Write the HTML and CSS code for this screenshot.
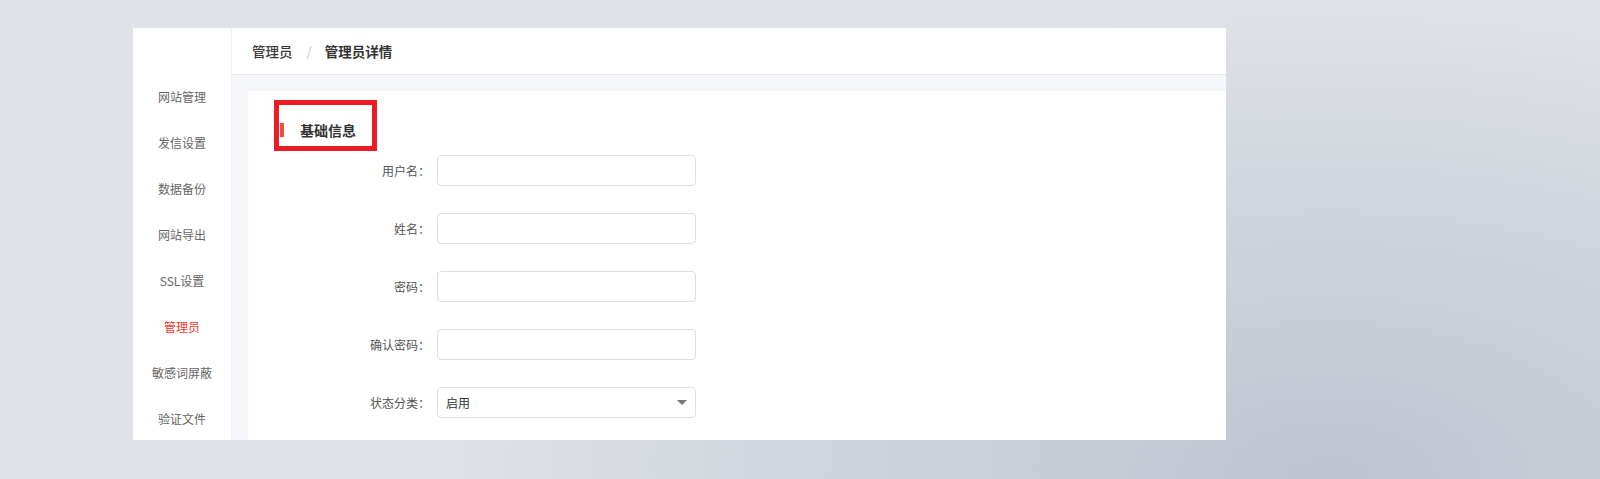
FILE: index.html
```html
<!DOCTYPE html>
<html lang="zh-CN">
<head>
<meta charset="utf-8">
<title>管理员详情</title>
<link rel="stylesheet" href="styles.css">
</head>
<body>
<div class="card">
  <aside class="sidebar">
    <div class="nav-item">网站管理</div>
    <div class="nav-item">发信设置</div>
    <div class="nav-item">数据备份</div>
    <div class="nav-item">网站导出</div>
    <div class="nav-item">SSL设置</div>
    <div class="nav-item active">管理员</div>
    <div class="nav-item">敏感词屏蔽</div>
    <div class="nav-item">验证文件</div>
  </aside>
  <main class="main">
    <header class="crumbs">
      <span class="crumb">管理员</span>
      <span class="sep">/</span>
      <span class="crumb current">管理员详情</span>
    </header>
    <div class="body">
      <section class="panel">
        <div class="title-wrap">
          <div class="section-title"><span class="bar"></span>基础信息</div>
        </div>
        <form class="form">
          <div class="row"><label class="label">用户名：</label><input class="input" type="text"></div>
          <div class="row"><label class="label">姓名：</label><input class="input" type="text"></div>
          <div class="row"><label class="label">密码：</label><input class="input" type="password"></div>
          <div class="row"><label class="label">确认密码：</label><input class="input" type="password"></div>
          <div class="row"><label class="label">状态分类：</label>
            <div class="select"><span class="select-text">启用</span><span class="caret"></span></div>
          </div>
        </form>
      </section>
    </div>
  </main>
</div>
</body>
</html>
```
FILE: styles.css
```css
html, body {
  margin: 0;
  height: 100%;
}
body {
  width: 1600px;
  height: 479px;
  overflow: hidden;
  box-sizing: border-box;
  padding: 28px 0 0 133px;
  background: radial-gradient(ellipse 900px 480px at 1330px 479px, #bec4d0 0%, #ccd1da 45%, #dfe2e7 100%);
  font-family: "Noto Sans CJK SC", "Noto Sans", sans-serif;
  color: #333;
}
.card {
  width: 1093px;
  height: 412px;
  background: #fff;
  display: flex;
  overflow: hidden;
}
.sidebar {
  width: 98px;
  flex: none;
  padding-top: 46px;
  border-right: 1px solid #eef0f3;
  display: flex;
  flex-direction: column;
}
.nav-item {
  height: 46px;
  line-height: 46px;
  flex: none;
  text-align: center;
  font-size: 12px;
  color: #666;
}
.nav-item.active {
  color: #f5352a;
}
.main {
  flex: 1;
  display: flex;
  flex-direction: column;
  min-width: 0;
}
.crumbs {
  height: 46px;
  flex: none;
  border-bottom: 1px solid #e8eaec;
  display: flex;
  align-items: center;
  padding-left: 20px;
  font-size: 13.5px;
  color: #3a3a3a;
}
.crumb {
  font-weight: 500;
}
.crumb.current {
  font-weight: 700;
  color: #333;
}
.sep {
  color: #c5c8ce;
  font-weight: 400;
  margin: 0 13px 0 14px;
}
.body {
  flex: 1;
  background: #f5f7fa;
  padding: 16px 0 0 16px;
  display: flex;
}
.panel {
  flex: 1;
  background: #fff;
}
.title-wrap {
  margin: 9px 0 0 26px;
  width: 93px;
  height: 41px;
  border: 5px solid #ed1c24;
  display: flex;
  align-items: flex-end;
}
.section-title {
  display: flex;
  align-items: center;
  font-size: 14px;
  font-weight: 700;
  color: #333;
  height: 20px;
  margin-bottom: 6px;
}
.bar {
  width: 4px;
  height: 14px;
  background: #f04c3a;
  margin: 0 16px 0 1px;
}
.form {
  padding-top: 4px;
}
.row {
  display: flex;
  align-items: center;
  height: 31px;
  margin-bottom: 27px;
}
.label {
  width: 189px;
  flex: none;
  text-align: right;
  font-size: 12px;
  color: #555;
  padding-right: 7px;
  box-sizing: border-box;
}
.input, .select {
  width: 259px;
  height: 31px;
  box-sizing: border-box;
  border: 1px solid #dcdee2;
  border-radius: 4px;
  background: #fff;
  margin: 0;
  padding: 0 8px;
  font-family: inherit;
  font-size: 12px;
  outline: none;
}
.select {
  display: flex;
  align-items: center;
  justify-content: space-between;
}
.select-text {
  color: #333;
}
.caret {
  width: 0;
  height: 0;
  border-left: 5px solid transparent;
  border-right: 5px solid transparent;
  border-top: 5px solid #777;
}
```
